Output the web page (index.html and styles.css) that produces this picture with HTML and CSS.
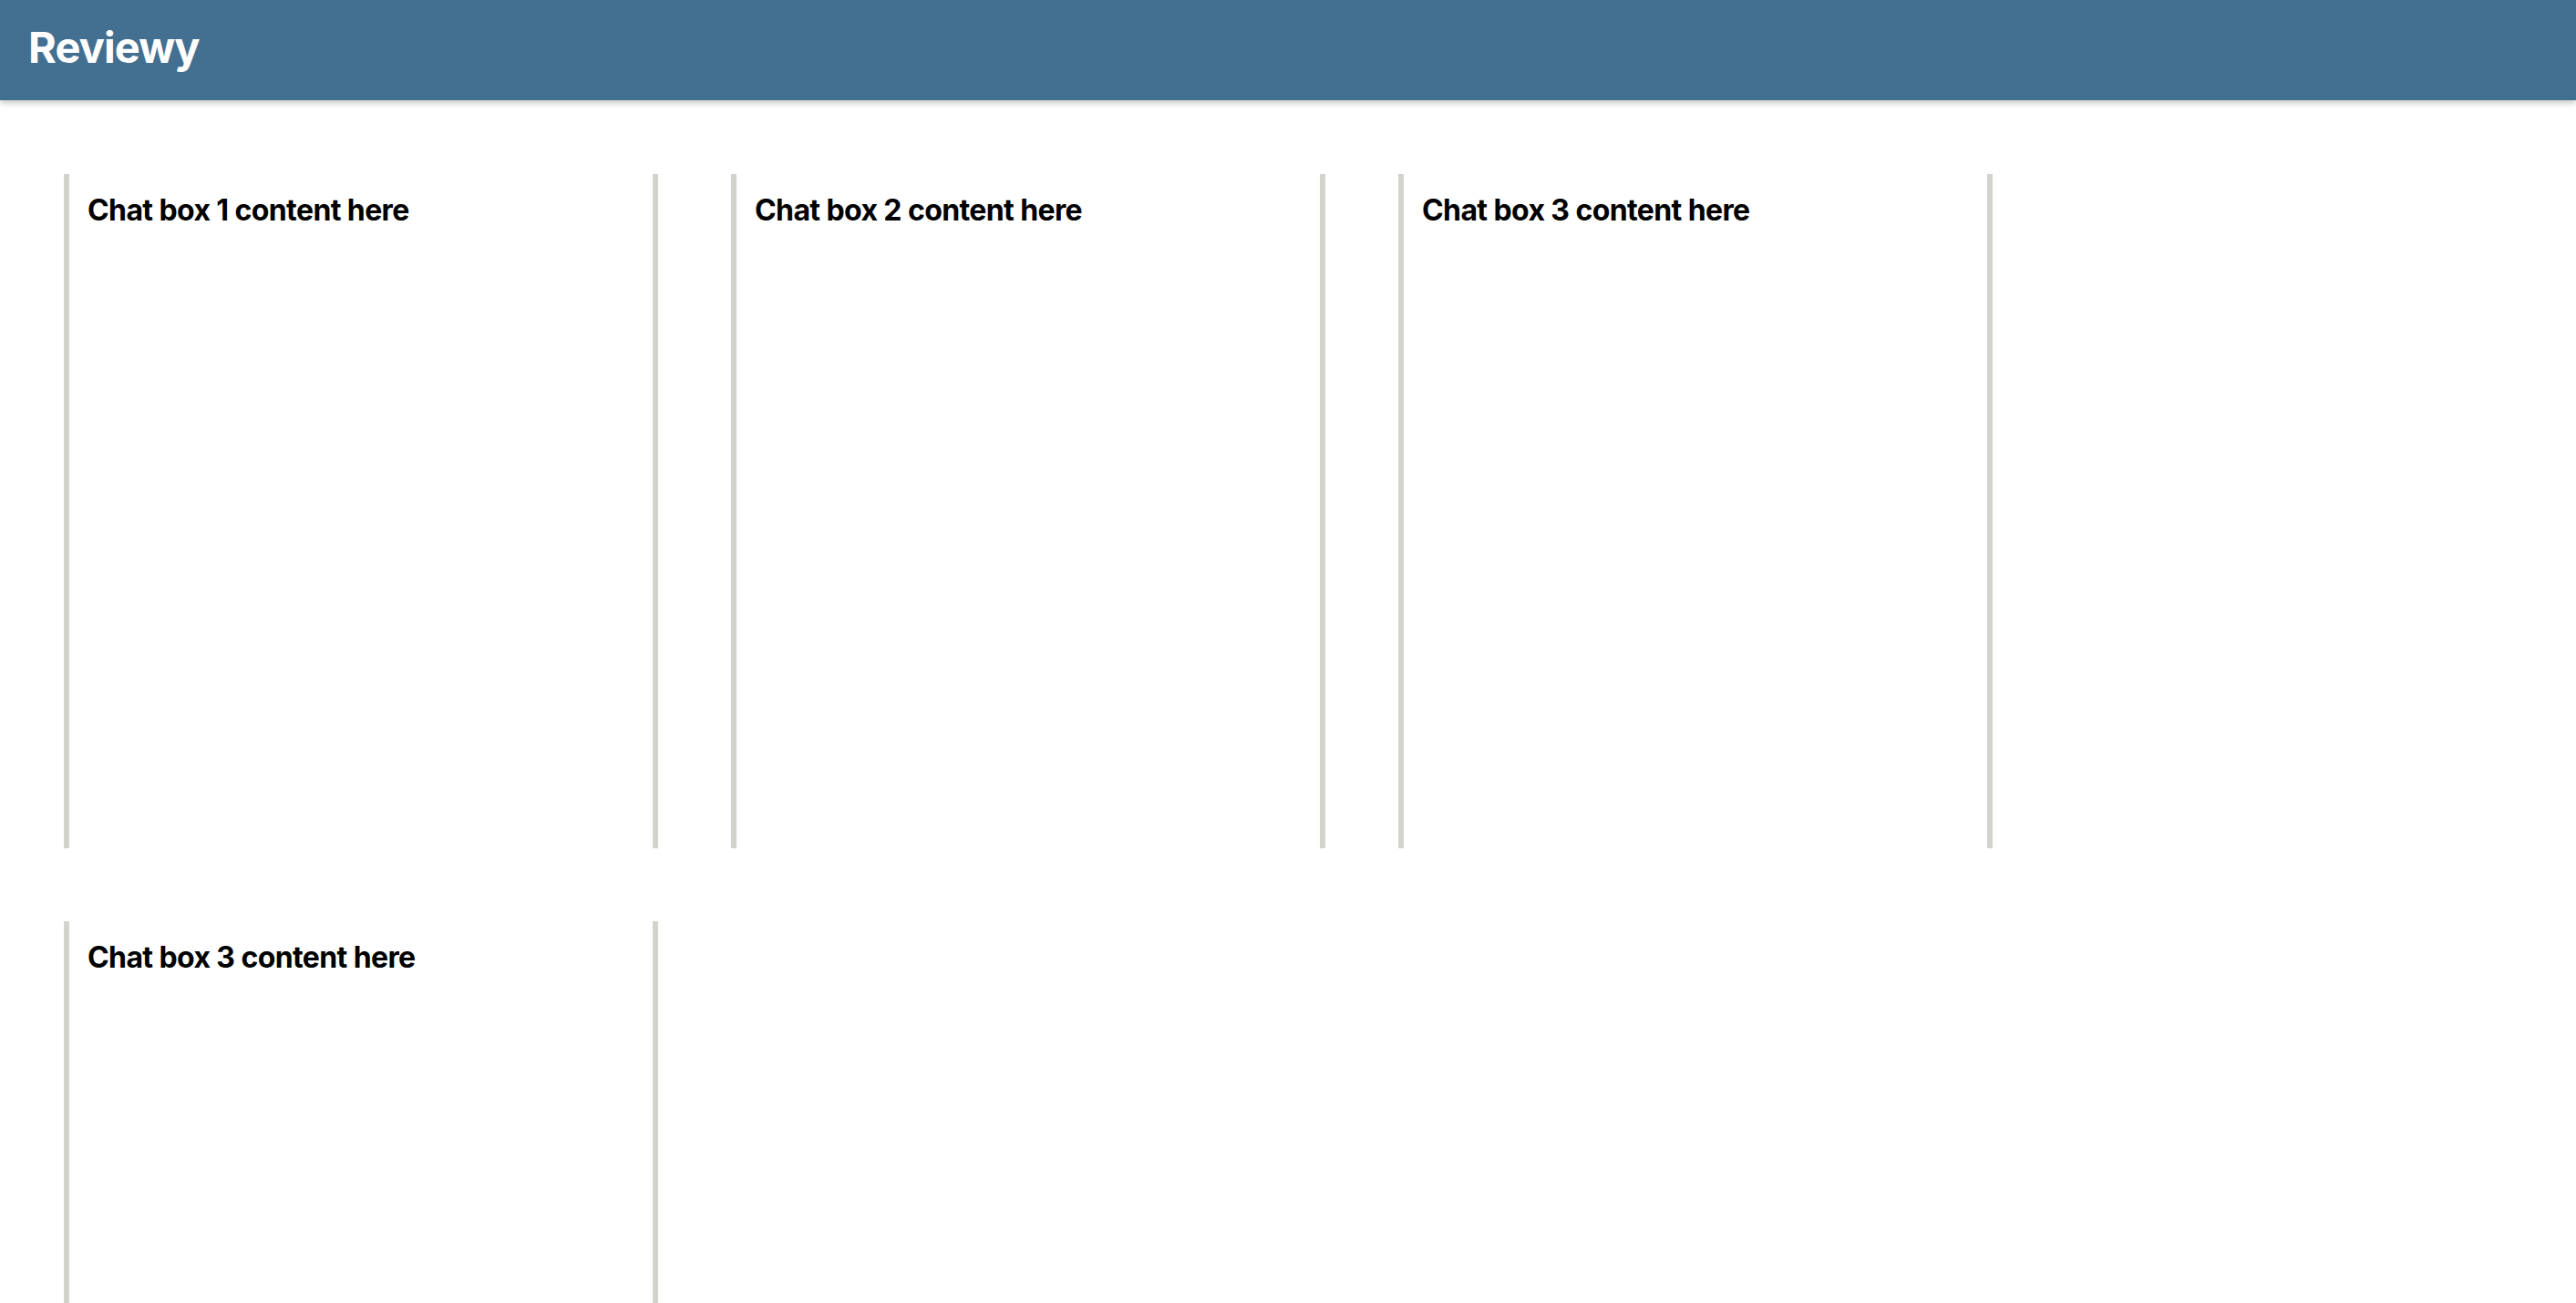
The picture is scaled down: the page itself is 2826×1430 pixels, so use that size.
FILE: index.html
```html
<!DOCTYPE html>
<html lang="en">
<head>
<meta charset="utf-8">
<title>Reviewy</title>
<link rel="stylesheet" href="styles.css">
</head>
<body>
<header class="topbar">
  <h1 class="brand">Reviewy</h1>
</header>
<main class="board">
  <section class="chat-box"><p class="chat-title">Chat box 1 content here</p></section>
  <section class="chat-box"><p class="chat-title">Chat box 2 content here</p></section>
  <section class="chat-box"><p class="chat-title">Chat box 3 content here</p></section>
  <section class="chat-box"><p class="chat-title">Chat box 3 content here</p></section>
</main>
</body>
</html>
```
FILE: styles.css
```css
* { box-sizing: border-box; }
html, body { margin: 0; padding: 0; background: #ffffff; }
body { font-family: Inter, "Noto Sans", "Liberation Sans", sans-serif; color: #000; }

.topbar {
  height: 110px;
  background: #436f91;
  display: flex;
  align-items: center;
  padding: 0 31px 8px;
  box-shadow: 0 2px 8px rgba(0, 0, 0, 0.28);
  position: relative;
  z-index: 1;
}
.brand {
  margin: 0;
  color: #ffffff;
  font-size: 47px;
  font-weight: 700;
  letter-spacing: -0.9px;
  line-height: 1;
}

.board {
  display: grid;
  grid-template-columns: repeat(3, 652px);
  gap: 80px;
  padding: 81px 70px 0;
}
.chat-box {
  height: 740px;
  border-left: 6px solid #d3d3ce;
  border-right: 6px solid #d3d3ce;
  padding: 20px 20px;
}
.chat-title {
  margin: 0;
  font-size: 32px;
  font-weight: 700;
  letter-spacing: -0.6px;
}
```
